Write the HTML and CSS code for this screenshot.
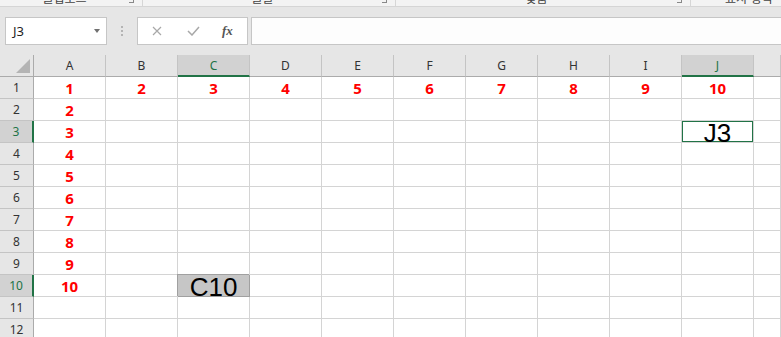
FILE: index.html
```html
<!DOCTYPE html>
<html lang="ko">
<head>
    <meta charset="UTF-8">
    <meta name="viewport" content="width=device-width, initial-scale=1.0">
    <title>Book1 - Excel</title>
    <link rel="stylesheet" href="styles.css">
</head>
<body>

<div class="ribbon">
    <div class="group g1"><span class="label">클립보드</span><span class="launcher"></span></div>
    <div class="group g2"><span class="label">글꼴</span><span class="launcher"></span></div>
    <div class="group g3"><span class="label">맞춤</span><span class="launcher"></span></div>
    <div class="group g4"><span class="label">표시 형식</span></div>
</div>

<div class="formula-bar">
    <div class="name-box"><span>J3</span><span class="caret"></span></div>
    <div class="grip"><i></i><i></i><i></i></div>
    <div class="fx-buttons">
        <svg class="btn-cancel" width="10" height="10" viewBox="0 0 10 10">
            <path d="M1 1 L9 9 M9 1 L1 9" stroke="#a8a8a8" stroke-width="1.2" fill="none"/>
        </svg>
        <svg class="btn-enter" width="13" height="10" viewBox="0 0 13 10">
            <path d="M1 5 L5 9 L12 1" stroke="#a8a8a8" stroke-width="1.5" fill="none"/>
        </svg>
        <span class="fx">fx</span>
    </div>
    <div class="formula-input"></div>
</div>

<div class="sheet" id="sheet"></div>

<script>
    let cols = ["A", "B", "C", "D", "E", "F", "G", "H", "I", "J"];
    let selCols = ["C", "J"];
    let selRows = [3, 10];
    let sheet = document.getElementById("sheet");

    function addCell(cls, html) {
        let div = document.createElement("div");
        div.className = "cell " + cls;
        div.innerHTML = html;
        sheet.appendChild(div);
        return div;
    }

    addCell("head corner", '<svg width="14" height="14" viewBox="0 0 14 14"><polygon points="14,0 14,14 0,14" fill="#b4b4b4"/></svg>');
    cols.forEach(c => addCell("head col-head" + (selCols.includes(c) ? " selected" : ""), c));
    addCell("head col-head", "");

    for (let r = 1; r <= 12; r++) {
        addCell("head row-head" + (selRows.includes(r) ? " selected" : ""), r);
        cols.forEach((c, i) => {
            let name = c + r;
            if (name === "J3") {
                addCell("big active", "<span>J3</span>");
            } else if (name === "C10") {
                addCell("big range", "<span>C10</span>");
            } else if (r === 1) {
                addCell("num", i + 1);
            } else if (i === 0 && r <= 10) {
                addCell("num", r);
            } else {
                addCell("", "");
            }
        });
        addCell("", "");
    }
</script>

</body>
</html>
```

FILE: styles.css
```css
body {
    margin: 0;
    width: 781px;
    height: 337px;
    overflow: hidden;
    background: #ffffff;
    font-family: "Noto Sans", "Noto Sans CJK KR", sans-serif;
}

/* ribbon group labels, mostly scrolled out of view */
.ribbon {
    display: flex;
    height: 6px;
    overflow: hidden;
    background: #f3f3f3;
    border-bottom: 1px solid #d5d5d5;
}
.group {
    display: flex;
    border-right: 1px solid #d6d6d6;
}
.g1 { width: 142px; }
.g2 { width: 252px; }
.g3 { width: 294px; }
.g4 { flex: 1; border-right: none; }
.label {
    flex: 1;
    text-align: center;
    font-family: "Noto Sans CJK KR", sans-serif;
    font-size: 12px;
    line-height: 12px;
    margin-top: -8px;
    color: #444;
    white-space: nowrap;
}
.g4 .label {
    text-align: left;
    padding-left: 34px;
}
.launcher {
    width: 4px;
    height: 2px;
    margin-right: 8px;
    border-right: 1px solid #888;
    border-bottom: 1px solid #888;
}

/* name box + formula bar */
.formula-bar {
    display: flex;
    align-items: flex-start;
    height: 48px;
    box-sizing: border-box;
    padding: 10px 0 10px 5px;
    background: #e6e6e6;
}
.name-box {
    width: 102px;
    height: 28px;
    box-sizing: border-box;
    display: flex;
    align-items: center;
    padding: 0 6px 0 7px;
    background: #fff;
    border: 1px solid #c6c6c6;
    font-size: 13px;
    color: #222;
}
.caret {
    margin-left: auto;
    border-left: 3px solid transparent;
    border-right: 3px solid transparent;
    border-top: 4px solid #707070;
}
.grip {
    width: 30px;
    display: flex;
    flex-direction: column;
    align-items: center;
    gap: 2px;
    padding-top: 9px;
}
.grip i {
    width: 2px;
    height: 2px;
    background: #b4b4b4;
}
.fx-buttons {
    width: 111px;
    height: 28px;
    box-sizing: border-box;
    display: flex;
    align-items: center;
    padding-left: 14px;
    background: #fff;
    border: 1px solid #c6c6c6;
}
.btn-enter {
    margin-left: 25px;
}
.fx {
    margin-left: 22px;
    font-family: "Liberation Serif", serif;
    font-style: italic;
    font-weight: bold;
    font-size: 13px;
    color: #555;
}
.formula-input {
    flex: 1;
    height: 28px;
    box-sizing: border-box;
    margin-left: 3px;
    background: #fdfdfd;
    border: 1px solid #c6c6c6;
    border-right: none;
}

/* worksheet grid */
.sheet {
    display: grid;
    grid-template-columns: 34px repeat(10, 72px) 1fr;
    grid-auto-rows: 22px;
}
.cell {
    box-sizing: border-box;
    display: flex;
    align-items: center;
    justify-content: center;
    border-right: 1px solid #d4d4d4;
    border-bottom: 1px solid #d4d4d4;
}
.head {
    background: #e6e6e6;
    font-size: 12px;
    color: #333;
}
.corner {
    align-items: flex-end;
    justify-content: flex-end;
    padding: 0 3px 3px 0;
    border-right-color: #ababab;
    border-bottom-color: #ababab;
}
.col-head {
    border-right-color: #c4c4c4;
    border-bottom-color: #ababab;
}
.row-head {
    border-right-color: #ababab;
    border-bottom-color: #c4c4c4;
}
.col-head.selected {
    background: #d2d2d2;
    color: #217346;
    border-bottom: 2px solid #217346;
}
.row-head.selected {
    background: #d2d2d2;
    color: #217346;
    border-right: 2px solid #217346;
}
.num {
    font-weight: bold;
    font-size: 15px;
    color: #ff0000;
}
.big {
    align-items: flex-end;
    font-family: "Liberation Sans", sans-serif;
    font-size: 26px;
    line-height: 26px;
    color: #000;
}
.big span {
    margin-bottom: -4px;
}
.active {
    box-shadow: inset 0 0 0 1px #217346;
}
.range {
    background: #c6c6c6;
    border-right-color: #a0a0a0;
    border-bottom-color: #a0a0a0;
    box-shadow: -1px -1px 0 #a0a0a0;
}
```
